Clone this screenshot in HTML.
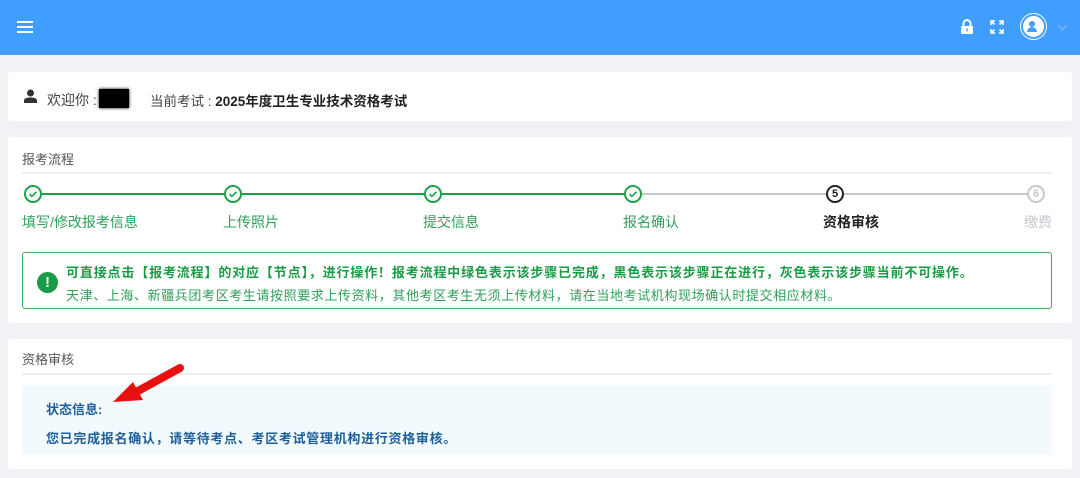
<!DOCTYPE html><html><head><meta charset="utf-8"><style>
body{margin:0;width:1080px;height:478px;background:#f0f2f5;font-family:"Liberation Sans","Noto Sans CJK SC",sans-serif;position:relative;overflow:hidden;font-size:13px}
.a{position:absolute}
.card{position:absolute;background:#fff;border-radius:3px}
.c{position:absolute;width:18px;height:18px;border-radius:50%;border:2px solid #1aa44a;background:#fff;box-sizing:border-box;top:185px;text-align:center;font-size:11px;font-weight:bold;line-height:14px}
.c svg{margin-top:1px}
.lb{position:absolute;top:212px;font-size:14px;color:#2ea05a}
</style></head><body>
<div class="a" style="left:0;top:0;width:1080px;height:55px;background:#409eff"></div>
<div class="a" style="left:17px;top:21px;width:16px;height:2px;background:#fff;box-shadow:0 5px 0 #fff,0 10px 0 #fff"></div>
<svg class="a" style="left:960px;top:19px" width="14" height="16" viewBox="0 0 14 16"><path d="M3.5 7V4.5a3.5 3.5 0 0 1 7 0V7" stroke="#fff" stroke-width="2" fill="none"/><rect x="1" y="7" width="12" height="8" rx="1" fill="#fff"/><rect x="6.3" y="9.5" width="1.4" height="3" fill="#409eff"/></svg>
<svg class="a" style="left:990px;top:20px" width="14" height="14" viewBox="0 0 14 14" fill="none" stroke="#fff" stroke-width="1.6"><path d="M1 5V1h4M9 1h4v4M13 9v4H9M5 13H1V9M1 1l3.5 3.5M13 1L9.5 4.5M13 13L9.5 9.5M1 13l3.5-3.5"/></svg>
<div class="a" style="left:1021px;top:14px;width:21px;height:21px;border-radius:50%;background:#fff;border:2px solid #409eff;box-shadow:0 0 0 1px #fff"></div>
<svg class="a" style="left:1024px;top:18px" width="16" height="16" viewBox="0 0 16 16"><circle cx="8" cy="6" r="3" fill="#409eff"/><path d="M3 14a5 5 0 0 1 10 0z" fill="#409eff"/></svg>
<svg class="a" style="left:1057px;top:24px" width="11" height="7"><path d="M1 1l4.5 4.5L10 1" stroke="#8ab8ee" fill="none" stroke-width="1.2"/></svg>

<div class="card" style="left:8px;top:72px;width:1064px;height:49px"></div>
<svg class="a" style="left:24px;top:89px" width="13" height="14" viewBox="0 0 13 14"><circle cx="6.5" cy="4" r="3.5" fill="#333"/><path d="M0 14v-2.5C0 9.5 2.5 8.5 6.5 8.5S13 9.5 13 11.5V14z" fill="#333"/></svg>
<div class="a" style="left:47px;top:90px;color:#444;font-size:14px">欢迎你 :</div>
<div class="a" style="left:99px;top:89px;width:30px;height:19px;background:#000;box-shadow:0 0 3px #000"></div>
<div class="a" style="left:150px;top:90px;color:#444;font-size:13.5px">当前考试 : <b style="color:#222">2025年度卫生专业技术资格考试</b></div>

<div class="card" style="left:8px;top:137px;width:1064px;height:186px"></div>
<div class="a" style="left:22px;top:149px;color:#555;font-size:13px">报考流程</div>
<div class="a" style="left:22px;top:172px;width:1030px;height:2px;background:#eceef1"></div>
<div class="a" style="left:33px;top:193px;width:600px;height:2px;background:#1aa44a"></div>
<div class="a" style="left:633px;top:193px;width:402px;height:2px;background:#c6c8cd"></div>
<div class="c" style="left:24px"><svg width="12" height="12" viewBox="0 0 12 12"><path d="M2.5 6l2.3 2.3L9.5 3.8" stroke="#1aa44a" stroke-width="1.6" fill="none"/></svg></div>
<div class="c" style="left:224px"><svg width="12" height="12" viewBox="0 0 12 12"><path d="M2.5 6l2.3 2.3L9.5 3.8" stroke="#1aa44a" stroke-width="1.6" fill="none"/></svg></div>
<div class="c" style="left:424px"><svg width="12" height="12" viewBox="0 0 12 12"><path d="M2.5 6l2.3 2.3L9.5 3.8" stroke="#1aa44a" stroke-width="1.6" fill="none"/></svg></div>
<div class="c" style="left:624px"><svg width="12" height="12" viewBox="0 0 12 12"><path d="M2.5 6l2.3 2.3L9.5 3.8" stroke="#1aa44a" stroke-width="1.6" fill="none"/></svg></div>
<div class="c" style="left:826px;border-color:#222;color:#222">5</div>
<div class="c" style="left:1027px;border-color:#c6c8cd;color:#c6c8cd">6</div>
<div class="lb" style="left:22px">填写/修改报考信息</div>
<div class="lb" style="left:223px">上传照片</div>
<div class="lb" style="left:423px">提交信息</div>
<div class="lb" style="left:623px">报名确认</div>
<div class="lb" style="left:823px;color:#222;font-weight:bold">资格审核</div>
<div class="lb" style="left:1024px;color:#c6c8cd">缴费</div>
<div class="a" style="left:22px;top:252px;width:1030px;height:57px;border:1px solid #3aae5c;border-radius:3px;box-sizing:border-box"></div>
<div class="a" style="left:37px;top:272px;width:21px;height:21px;border-radius:50%;background:#1a9b45;color:#fff;text-align:center;font-weight:bold;font-size:15px;line-height:21px">!</div>
<div class="a" style="left:66px;top:262px;color:#1a9b45;font-weight:bold;font-size:13px;letter-spacing:0.85px;white-space:nowrap">可直接点击【报考流程】的对应【节点】，进行操作！报考流程中绿色表示该步骤已完成，黑色表示该步骤正在进行，灰色表示该步骤当前不可操作。</div>
<div class="a" style="left:66px;top:285px;color:#2ea05a;font-size:13px;letter-spacing:0.6px;white-space:nowrap">天津、上海、新疆兵团考区考生请按照要求上传资料，其他考区考生无须上传材料，请在当地考试机构现场确认时提交相应材料。</div>

<div class="card" style="left:8px;top:339px;width:1064px;height:130px"></div>
<div class="a" style="left:22px;top:349px;color:#555;font-size:13px">资格审核</div>
<div class="a" style="left:22px;top:373px;width:1030px;height:2px;background:#eceef1"></div>
<div class="a" style="left:22px;top:385px;width:1030px;height:70px;background:#f2fafe"></div>
<div class="a" style="left:46px;top:399px;color:#1f5f99;font-weight:bold;font-size:13px">状态信息:</div>
<div class="a" style="left:46px;top:428px;color:#1f5f99;font-weight:bold;font-size:13px;letter-spacing:0.7px">您已完成报名确认，请等待考点、考区考试管理机构进行资格审核。</div>
<svg class="a" style="left:0;top:0" width="1080" height="478"><polygon points="178,364.5 136,387.5 133,382 113,402 143,400 140,394.5 182,371.5" fill="#e81010"/><circle cx="180" cy="368" r="4" fill="#e81010"/></svg>
</body></html>
